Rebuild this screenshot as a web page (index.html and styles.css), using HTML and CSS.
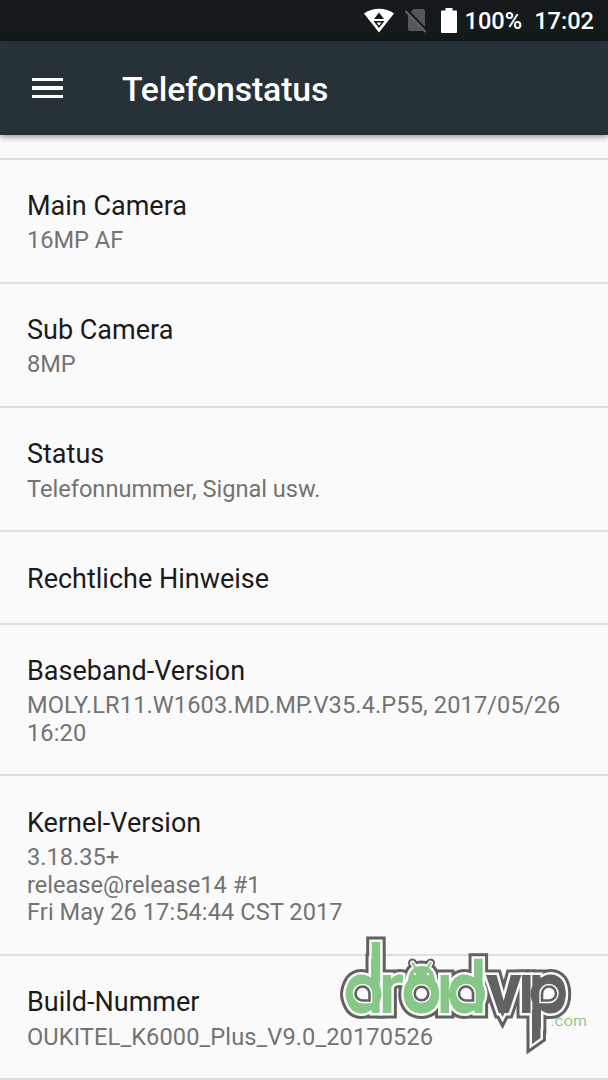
FILE: index.html
```html
<!DOCTYPE html>
<html lang="de">
<head>
<meta charset="utf-8">
<title>Telefonstatus</title>
<link rel="stylesheet" href="styles.css">
</head>
<body>
<div class="screen">
  <header class="status-bar">
    <svg class="wifi" width="30" height="25" viewBox="0 0 30 25"><path fill="#fff" d="M0 5.5C8-1 22-1 30 5.5L15 24.500Z"/><path fill="#14191c" d="M15 4.500l5 6.500H10zM9.500 13h11L15 20z"/><path fill="#fff" d="M12.700 14.500h4.600L15 17.700z"/></svg>
    <svg class="sim" width="22" height="25" viewBox="0 0 22 25"><path fill="#54585a" d="M8.500 1H18q2 0 2 2v20H5q-2 0-2-2V7z"/><path stroke="#14191c" stroke-width="2" d="M2.500 2l20 21"/><path stroke="#606466" stroke-width="2" d="M.500 3l20 21"/></svg>
    <svg class="battery" width="16" height="25" viewBox="0 0 16 25"><path fill="#fff" d="M4.500 0h7v2.500H15q1 0 1 1V24q0 1-1 1H1q-1 0-1-1V3.500q0-1 1-1h3.500z"/></svg>
    <span class="percent">100%</span>
    <span class="clock">17:02</span>
  </header>
  <nav class="toolbar">
    <div class="menu"><i></i><i></i><i></i></div>
    <h1>Telefonstatus</h1>
  </nav>
  <main class="list">
    <section class="row"><h2>Main Camera</h2><p>16MP AF</p></section>
    <section class="row"><h2>Sub Camera</h2><p>8MP</p></section>
    <section class="row"><h2>Status</h2><p>Telefonnummer, Signal usw.</p></section>
    <section class="row"><h2>Rechtliche Hinweise</h2></section>
    <section class="row"><h2>Baseband-Version</h2><p class="code">MOLY.LR11.W1603.MD.MP.V35.4.P55, 2017/05/26<br>16:20</p></section>
    <section class="row"><h2>Kernel-Version</h2><p>3.18.35+<br>release@release14 #1<br><span class="date">Fri May 26 17:54:44 CST 2017</span></p></section>
    <section class="row"><h2>Build-Nummer</h2><p class="code">OUKITEL_K6000_Plus_V9.0_20170526</p></section>
  </main>
  <svg class="watermark" width="268" height="140" viewBox="330 925 268 140">
    <defs>
      <g id="left">
        <text class="word" y="1013" x="343.500 378.500 401 435.500 446.500">droıd</text>
        <path d="M371.700 942h8.500v40h-8.500z"/>
        <path d="M408 982c0-10 5-16 13.500-16s13.500 6 13.500 16z"/>
        <circle cx="363.500" cy="994" r="18"/>
        <ellipse cx="421.500" cy="994" rx="17" ry="19"/>
        <circle cx="467" cy="994" r="18"/>
      </g>
      <g id="right">
        <text class="word" y="1013" x="485.500 517 528"><tspan class="heavy">v</tspan>ıp</text>
        <path d="M498 1008h9l-4.500 9zM532 1010h8.500v28l-8.500 6z"/>
        <circle cx="548" cy="994" r="17.500"/>
      </g>
      <path id="feelers" d="M412.500 963l3.500 6M430.500 963l-3.500 6"/>
      <g id="holes">
        <path d="M369.500 993.500v7H362.500a7 7 0 1 1 7-7z"/>
        <circle cx="421.500" cy="993.500" r="6.800"/>
        <path d="M473 993.500v7H466a7 7 0 1 1 7-7z"/>
        <path d="M542 993.500v7h7a7 7 0 1 0-7-7z"/>
      </g>
    </defs>
    <g class="edge"><use href="#left"/><use href="#right"/><use href="#feelers" class="feeler-edge"/></g>
    <g class="halo"><use href="#left"/><use href="#right"/><use href="#feelers" class="feeler-halo"/></g>
    <use href="#left" class="green"/>
    <use href="#right" class="gray"/>
    <use href="#feelers" class="feeler"/>
    <g class="eyes"><circle cx="415" cy="974" r="1.300"/><circle cx="428" cy="974" r="1.300"/></g>
    <use href="#holes" class="hole-halo"/>
    <use href="#holes" class="counters"/>
    <text class="dotcom" x="550" y="1026" textLength="37" lengthAdjust="spacingAndGlyphs">.com</text>
  </svg>
</div>
</body>
</html>
```
FILE: styles.css
```css
* { box-sizing: border-box; }
body { margin: 0; font-family: Roboto, "Liberation Sans", sans-serif; }
.screen { position: relative; width: 608px; height: 1080px; overflow: hidden; background: #fafafa; }
.status-bar { display: flex; align-items: center; justify-content: flex-end; height: 41px; padding-right: 14px; background: #14191c; color: #fff; font-size: 23.6px; font-weight: 500; }
.sim { margin-left: 11px; }
.battery { margin-left: 14px; }
.percent { margin-left: 8px; line-height: 40px; }
.clock { margin-left: 12px; }
.toolbar { position: relative; display: flex; align-items: center; height: 94px; padding-left: 32px; background: #263238; color: #fff; box-shadow: 0 2px 6px rgba(0, 0, 0, .4); }
.menu { display: flex; flex-direction: column; gap: 5px; width: 31px; }
.menu i { height: 3.500px; background: #fff; }
h1 { margin: 3px 0 0 59px; font-size: 33.8px; font-weight: 500; line-height: 40px; letter-spacing: -.15px; }
.list { padding-top: 22.500px; }
.row { padding: 31.500px 27px 27.300px; border-top: 2px solid #dfdfdf; }
.row:last-child { border-bottom: 2px solid #dfdfdf; }
.row h2 { margin: 0; font-size: 27px; font-weight: 400; line-height: 31.700px; color: #1b1b1b; }
.row p { margin: 4.600px 0 -.5px; font-size: 23.6px; line-height: 27.600px; color: #737373; white-space: nowrap; }
.row .code { letter-spacing: .11px; }
.date { letter-spacing: .07px; }
.watermark { position: absolute; left: 330px; top: 925px; opacity: .96; }
.word { font-size: 72px; font-weight: 500; }
.heavy { font-weight: 700; }
.edge { fill: #5c5a5c; stroke: #5c5a5c; stroke-width: 11px; }
.halo { fill: #fafafa; stroke: #fafafa; stroke-width: 5px; }
.green { fill: #83c785; }
.gray { fill: #5c5c5c; }
.feeler-edge { stroke-width: 9px; stroke-linecap: round; }
.feeler-halo { stroke-width: 5px; stroke-linecap: round; }
.feeler { stroke: #83c785; stroke-width: 2px; stroke-linecap: round; }
.eyes { fill: #fafafa; }
.hole-halo { fill: #fafafa; stroke: #fafafa; stroke-width: 5.500px; }
.counters { fill: #fafafa; stroke: #5c5a5c; stroke-width: 2.600px; }
.dotcom { font-family: Inter, Roboto, sans-serif; font-size: 13px; font-weight: 300; fill: #69b66c; }
```
